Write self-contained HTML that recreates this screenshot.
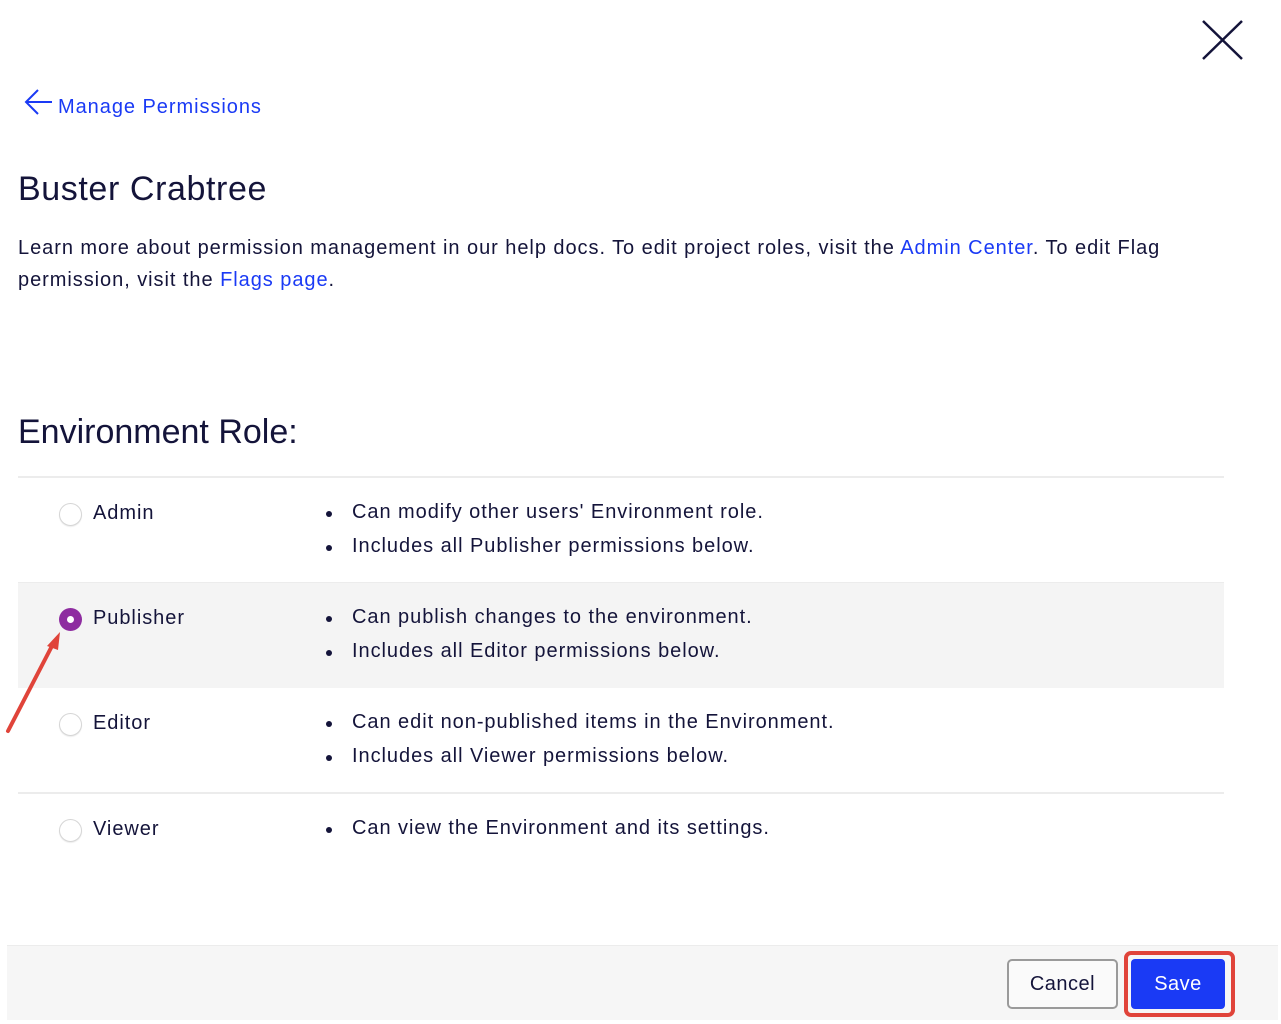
<!DOCTYPE html>
<html><head><meta charset="utf-8"><style>
*{margin:0;padding:0;box-sizing:border-box}
body{width:1281px;height:1024px;background:#fff;font-family:"Liberation Sans",sans-serif;color:#14143a;position:relative;overflow:hidden;letter-spacing:0.95px}
.abs{position:absolute}
a{color:#1a3af5;text-decoration:none}
.row{position:absolute;left:18px;width:1206px}
.radio{position:absolute;left:41px;width:23px;height:23px;border-radius:50%;border:1px solid #d6d6d6;background:#fff;box-shadow:0 1px 1px rgba(0,0,0,.08)}
.label{position:absolute;left:75px;font-size:20px;top:24px}
.b{position:absolute;left:306px;font-size:20px;top:23px}
.b li{list-style:none;position:relative;padding-left:28px;height:34px}
.b li:before{content:"";position:absolute;left:2px;top:10px;width:6px;height:6px;border-radius:50%;background:#14143a}
</style></head><body>
<svg class="abs" style="left:1201px;top:19px" width="44" height="44"><path d="M2 2L41 40M41 2L2 40" stroke="#14143a" stroke-width="2.5" fill="none"/></svg>
<svg class="abs" style="left:23px;top:88px" width="32" height="28"><path d="M29 14H3M15 2L3 14L15 26" stroke="#1a3af5" stroke-width="2" fill="none"/></svg>
<div class="abs" style="left:58px;top:96px;font-size:20px;color:#1a3af5">Manage Permissions</div>
<div class="abs" style="left:18px;top:170px;font-size:34px;letter-spacing:0.6px">Buster Crabtree</div>
<div class="abs" style="left:18px;top:232px;font-size:20px;line-height:32px;width:1200px">Learn more about permission management in our help docs. To edit project roles, visit the <a>Admin Center</a>. To edit Flag permission, visit the <a>Flags page</a>.</div>
<div class="abs" style="left:18px;top:413px;font-size:34px;letter-spacing:0">Environment Role:</div>
<div class="row" style="top:476px;height:2px;background:#ececec"></div>
<div class="row" style="top:478px;height:104px">
 <div class="radio" style="top:25px"></div><div class="label">Admin</div>
 <ul class="b"><li>Can modify other users' Environment role.</li><li>Includes all Publisher permissions below.</li></ul>
</div>
<div class="row" style="top:582px;height:106px;background:#f4f4f4;border-top:1px solid #ececec">
 <div class="radio" style="top:25px;border:none;background:#8e2ca0;box-shadow:none"><div style="position:absolute;left:8px;top:8px;width:7px;height:7px;border-radius:50%;background:#fff"></div></div>
 <div class="label">Publisher</div>
 <ul class="b"><li>Can publish changes to the environment.</li><li>Includes all Editor permissions below.</li></ul>
</div>
<div class="row" style="top:688px;height:104px">
 <div class="radio" style="top:25px"></div><div class="label">Editor</div>
 <ul class="b"><li>Can edit non-published items in the Environment.</li><li>Includes all Viewer permissions below.</li></ul>
</div>
<div class="row" style="top:792px;height:2px;background:#ececec"></div>
<div class="row" style="top:794px;height:100px">
 <div class="radio" style="top:25px"></div><div class="label">Viewer</div>
 <ul class="b"><li>Can view the Environment and its settings.</li></ul>
</div>
<svg class="abs" style="left:0;top:620px" width="70" height="120"><path d="M8 111L53 24" stroke="#e0443a" stroke-width="4" stroke-linecap="round"/><path d="M60 12L47 26L58 30Z" fill="#e0443a"/></svg>
<div class="abs" style="left:7px;top:945px;width:1271px;height:75px;background:#f6f6f6;border-top:1px solid #ececec"></div>
<div class="abs" style="left:1007px;top:959px;width:111px;height:50px;border:2px solid #9a9a9a;border-radius:5px;background:#fafafa;font-size:20px;text-align:center;line-height:46px;letter-spacing:0.5px">Cancel</div>
<div class="abs" style="left:1124px;top:951px;width:111px;height:66px;border:4px solid #e0443a;border-radius:7px"></div>
<div class="abs" style="left:1131px;top:959px;width:94px;height:50px;background:#1a3af5;border-radius:4px;color:#fff;font-size:20px;text-align:center;line-height:50px;letter-spacing:0.5px">Save</div>
</body></html>
